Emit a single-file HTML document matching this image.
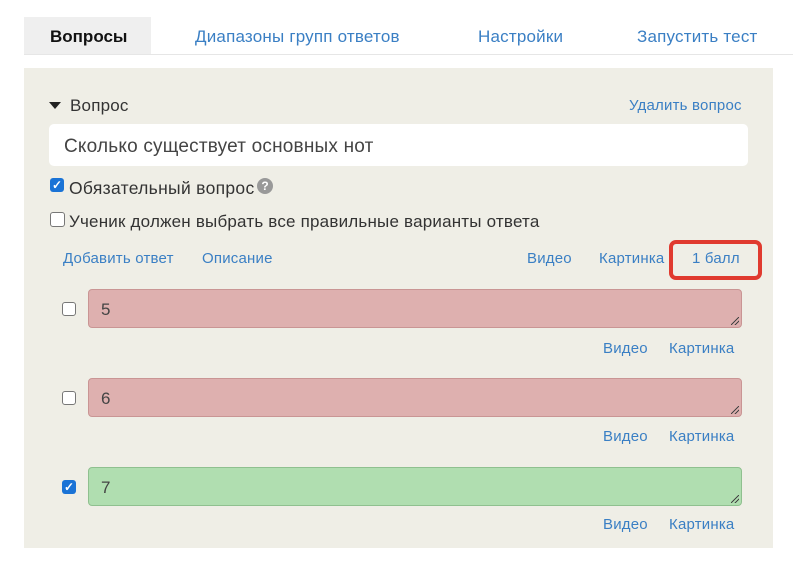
<!DOCTYPE html>
<html><head><meta charset="utf-8"><style>
body{margin:0;width:793px;height:567px;background:#fff;font-family:"Liberation Sans",sans-serif;position:relative;overflow:hidden}
.a{position:absolute;white-space:nowrap}
.l{color:#3a7fc4;font-size:15px;letter-spacing:0.2px}
.tab{font-size:17px;color:#3a7fc4;top:27px;letter-spacing:0.2px}
.ta{position:absolute;left:88px;width:652px;height:37px;border-radius:4px;background:#deb0af;border:1px solid #c99594;font-size:17px;color:#444}
.ta span{position:absolute;left:12px;top:10px}
.g{background:#b0deb0;border-color:#8fc08f}
.cb{position:absolute;left:62px;width:12px;height:12px;border:1.5px solid #777;border-radius:3px;background:#fff}
.grip{position:absolute;right:2px;bottom:2px;width:8px;height:8px;background:linear-gradient(135deg,transparent 45%,#444 45%,#444 55%,transparent 55%,transparent 70%,#444 70%,#444 80%,transparent 80%)}
</style></head><body>
<div class="a" style="left:24px;top:17px;width:127px;height:37px;background:#efefef"></div>
<div class="a" style="left:24px;top:54px;width:769px;height:1px;background:#e6e6e6"></div>
<div class="a tab" style="left:50px;color:#111;font-weight:bold;letter-spacing:0">Вопросы</div>
<div class="a tab" style="left:195px">Диапазоны групп ответов</div>
<div class="a tab" style="left:478px">Настройки</div>
<div class="a tab" style="left:637px">Запустить тест</div>
<div class="a" style="left:24px;top:68px;width:749px;height:480px;background:#efeee6"></div>
<div class="a" style="left:49px;top:102px;width:0;height:0;border-left:6px solid transparent;border-right:6px solid transparent;border-top:7px solid #222"></div>
<div class="a" style="left:70px;top:96px;font-size:17px;color:#333;letter-spacing:0.2px">Вопрос</div>
<div class="a l" style="left:629px;top:97px">Удалить вопрос</div>
<div class="a" style="left:49px;top:124px;width:699px;height:42px;background:#fff;border-radius:5px"></div>
<div class="a" style="left:64px;top:136px;font-size:19px;color:#444;letter-spacing:0.2px">Сколько существует основных нот</div>
<div class="a" style="left:50px;top:178px;width:14px;height:14px;background:#1a73d6;border-radius:3px;color:#fff;font-size:12px;line-height:14px;text-align:center;font-weight:bold">✓</div>
<div class="a" style="left:69px;top:178px;font-size:17.5px;color:#333;letter-spacing:0.3px">Обязательный вопрос</div>
<div class="a" style="left:257px;top:178px;width:16px;height:16px;border-radius:50%;background:#999;color:#fff;font-size:12px;line-height:16px;text-align:center;font-weight:bold">?</div>
<div class="a" style="left:50px;top:212px;width:13px;height:13px;border:1.5px solid #777;border-radius:3px;background:#fff"></div>
<div class="a" style="left:69px;top:212px;font-size:17px;color:#333;letter-spacing:0.2px">Ученик должен выбрать все правильные варианты ответа</div>
<div class="a l" style="left:63px;top:250px">Добавить ответ</div>
<div class="a l" style="left:202px;top:250px">Описание</div>
<div class="a l" style="left:527px;top:250px">Видео</div>
<div class="a l" style="left:599px;top:250px">Картинка</div>
<div class="a l" style="left:692px;top:250px">1 балл</div>
<div class="a" style="left:669px;top:240px;width:85px;height:32px;border:4px solid #e03a2f;border-radius:7px"></div>

<div class="cb" style="top:302px"></div>
<div class="ta" style="top:289px"><span>5</span><div class="grip"></div></div>
<div class="a l" style="left:603px;top:340px">Видео</div>
<div class="a l" style="left:669px;top:340px">Картинка</div>

<div class="cb" style="top:391px"></div>
<div class="ta" style="top:378px"><span>6</span><div class="grip"></div></div>
<div class="a l" style="left:603px;top:428px">Видео</div>
<div class="a l" style="left:669px;top:428px">Картинка</div>

<div class="a" style="left:62px;top:480px;width:14px;height:14px;background:#1a73d6;border-radius:3px;color:#fff;font-size:12px;line-height:14px;text-align:center;font-weight:bold">✓</div>
<div class="ta g" style="top:467px"><span>7</span><div class="grip"></div></div>
<div class="a l" style="left:603px;top:516px">Видео</div>
<div class="a l" style="left:669px;top:516px">Картинка</div>
</body></html>
